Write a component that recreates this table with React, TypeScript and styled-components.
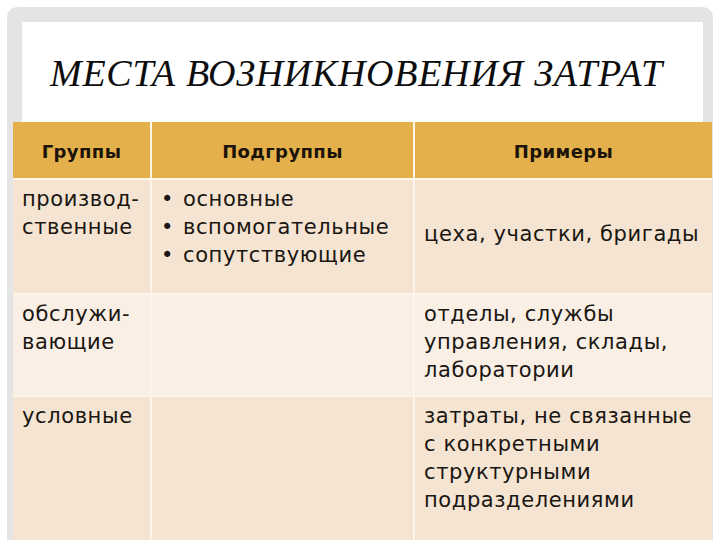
import React from "react";
import styled, { createGlobalStyle } from "styled-components";

const Global = createGlobalStyle`
  html, body { margin: 0; padding: 0; background: #ffffff; }
  body { width: 720px; height: 540px; overflow: hidden; font-family: "DejaVu Sans", sans-serif; }
`;

const Page = styled.div`
  width: 720px;
  height: 540px;
  box-sizing: border-box;
  padding: 7px 7px 0 7px;
  background: #ffffff;
`;

const Frame = styled.div`
  height: 540px;
  box-sizing: border-box;
  background: #e4e4e4;
  border-radius: 10px 10px 0 0;
  padding: 15px 1px 0 6px;
  display: flex;
  flex-direction: column;
`;

const TitleBox = styled.div`
  margin: 0 9px;
  height: 100px;
  background: #ffffff;
  display: flex;
  align-items: center;
  justify-content: center;
  padding-right: 12px;
  box-sizing: border-box;
`;

const Title = styled.div`
  margin: 0;
  font-family: "Liberation Serif", "Tinos", "DejaVu Serif", serif;
  font-style: italic;
  font-weight: normal;
  font-size: 38px;
  line-height: 40px;
  color: #0d0d0d;
  letter-spacing: 0.7px;
  padding-top: 2px;
`;

const Table = styled.div`
  flex: 1;
  display: grid;
  grid-template-columns: 137px 261px 1fr;
  grid-template-rows: 56px 113px 100px 1fr;
  gap: 2px;
  background: #fdf5ea;
`;

const HeadCell = styled.div`
  background: #e4b04b;
  display: flex;
  align-items: center;
  justify-content: center;
  font-family: "DejaVu Sans", sans-serif;
  font-weight: bold;
  font-size: 18px;
  letter-spacing: 0.4px;
  color: #1c1409;
  padding-top: 3px;
`;

const Cell = styled.div<{ $tone: string; $center?: boolean }>`
  background: ${(p) => p.$tone};
  padding: 5px 4px 0 9px;
  font-family: "DejaVu Sans", sans-serif;
  font-size: 21px;
  letter-spacing: 0.6px;
  line-height: 28px;
  color: #1a1612;
  display: flex;
  flex-direction: column;
  justify-content: ${(p) => (p.$center ? "center" : "flex-start")};
  ${(p) => (p.$center ? "padding-top: 0; padding-bottom: 6px;" : "")}
`;

const BulletList = styled.ul`
  margin: 0;
  padding: 0;
  list-style: none;
`;

const Bullet = styled.li`
  display: flex;
  &::before {
    content: "•";
    width: 22px;
    flex: none;
  }
`;

const Line = styled.span`
  display: block;
  white-space: nowrap;
`;

const toneA = "#f4e4d1";
const toneB = "#f9efe5";

export default function App() {
  return (
    <>
      <Global />
      <Page>
        <Frame>
          <TitleBox>
            <Title>МЕСТА ВОЗНИКНОВЕНИЯ ЗАТРАТ</Title>
          </TitleBox>
          <Table>
            <HeadCell>Группы</HeadCell>
            <HeadCell>Подгруппы</HeadCell>
            <HeadCell>Примеры</HeadCell>

            <Cell $tone={toneA}>
              <Line>производ-</Line>
              <Line>ственные</Line>
            </Cell>
            <Cell $tone={toneA}>
              <BulletList>
                <Bullet>основные</Bullet>
                <Bullet>вспомогательные</Bullet>
                <Bullet>сопутствующие</Bullet>
              </BulletList>
            </Cell>
            <Cell $tone={toneA} $center>
              <Line>цеха, участки, бригады</Line>
            </Cell>

            <Cell $tone={toneB}>
              <Line>обслужи-</Line>
              <Line>вающие</Line>
            </Cell>
            <Cell $tone={toneB} />
            <Cell $tone={toneB}>
              <Line>отделы, службы</Line>
              <Line>управления, склады,</Line>
              <Line>лаборатории</Line>
            </Cell>

            <Cell $tone={toneA}>
              <Line>условные</Line>
            </Cell>
            <Cell $tone={toneA} />
            <Cell $tone={toneA}>
              <Line>затраты, не связанные</Line>
              <Line>с конкретными</Line>
              <Line>структурными</Line>
              <Line>подразделениями</Line>
            </Cell>
          </Table>
        </Frame>
      </Page>
    </>
  );
}
